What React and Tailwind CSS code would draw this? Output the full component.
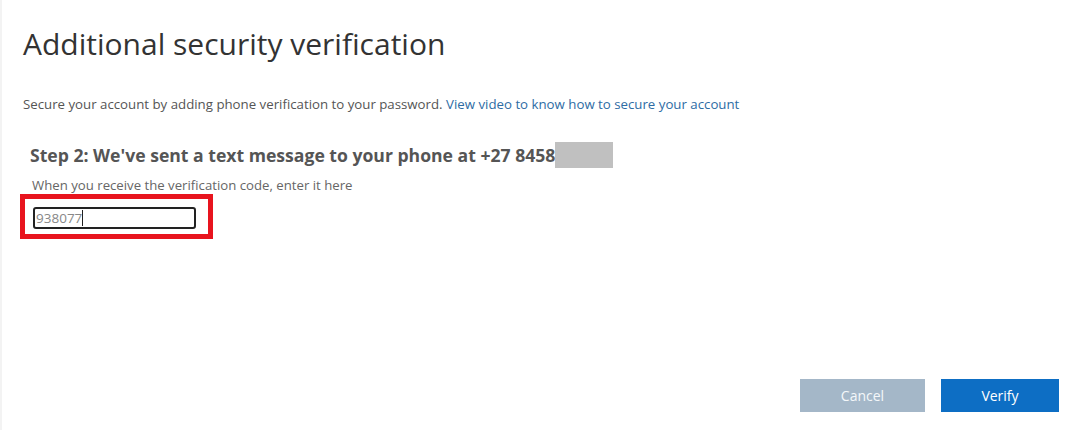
export default function App() {
  return (
    <div
      className="w-[1087px] h-[430px] bg-white relative overflow-hidden"
      style={{ fontFamily: '"Open Sans", "Noto Sans", sans-serif' }}
    >
      <div className="absolute left-0 top-0 bottom-0 w-[2px] bg-[#f3f3f3]" />
      <div className="pl-[23px] pt-[23px]">
        <h1 className="text-[30px] leading-[42px] text-[#333] font-normal">
          Additional security verification
        </h1>
        <p className="mt-[30px] text-[13.25px] leading-[18px] text-[#555]">
          Secure your account by adding phone verification to your password.{" "}
          <a href="#" className="text-[#2e6ca4]">
            View video to know how to secure your account
          </a>
        </p>
      </div>

      <div className="pl-[30px] mt-[29px]">
        <div className="flex items-center">
          <h2 className="text-[17.6px] leading-[26px] font-bold text-[#555]">
            Step 2: We've sent a text message to your phone at +27 8458
          </h2>
          <span className="inline-block w-[58px] h-[26px] bg-[#c0c0c0]" />
        </div>
        <p className="pl-[2px] mt-[8px] text-[13.2px] leading-[18px] text-[#666]">
          When you receive the verification code, enter it here
        </p>
      </div>

      <div className="ml-[20px] w-[193px] h-[45px] border-[5px] border-[#e8141e] flex items-center pl-[8px] pt-[2px]">
        <div className="w-[163px] h-[22px] border-2 border-[#222] rounded-[3px] flex items-center pl-[1px]">
          <span className="text-[13.5px] leading-[18px] text-[#888]">938077</span>
          <span className="w-px h-[16px] bg-[#222]" />
        </div>
      </div>

      <div className="absolute right-[28px] top-[379px] flex gap-[16px]">
        <button className="w-[125px] h-[33px] bg-[#a4b7c8] text-[#f4f7fa] text-[14px]">
          Cancel
        </button>
        <button className="w-[118px] h-[33px] bg-[#0d6ec4] text-white text-[14px]">
          Verify
        </button>
      </div>
    </div>
  );
}
